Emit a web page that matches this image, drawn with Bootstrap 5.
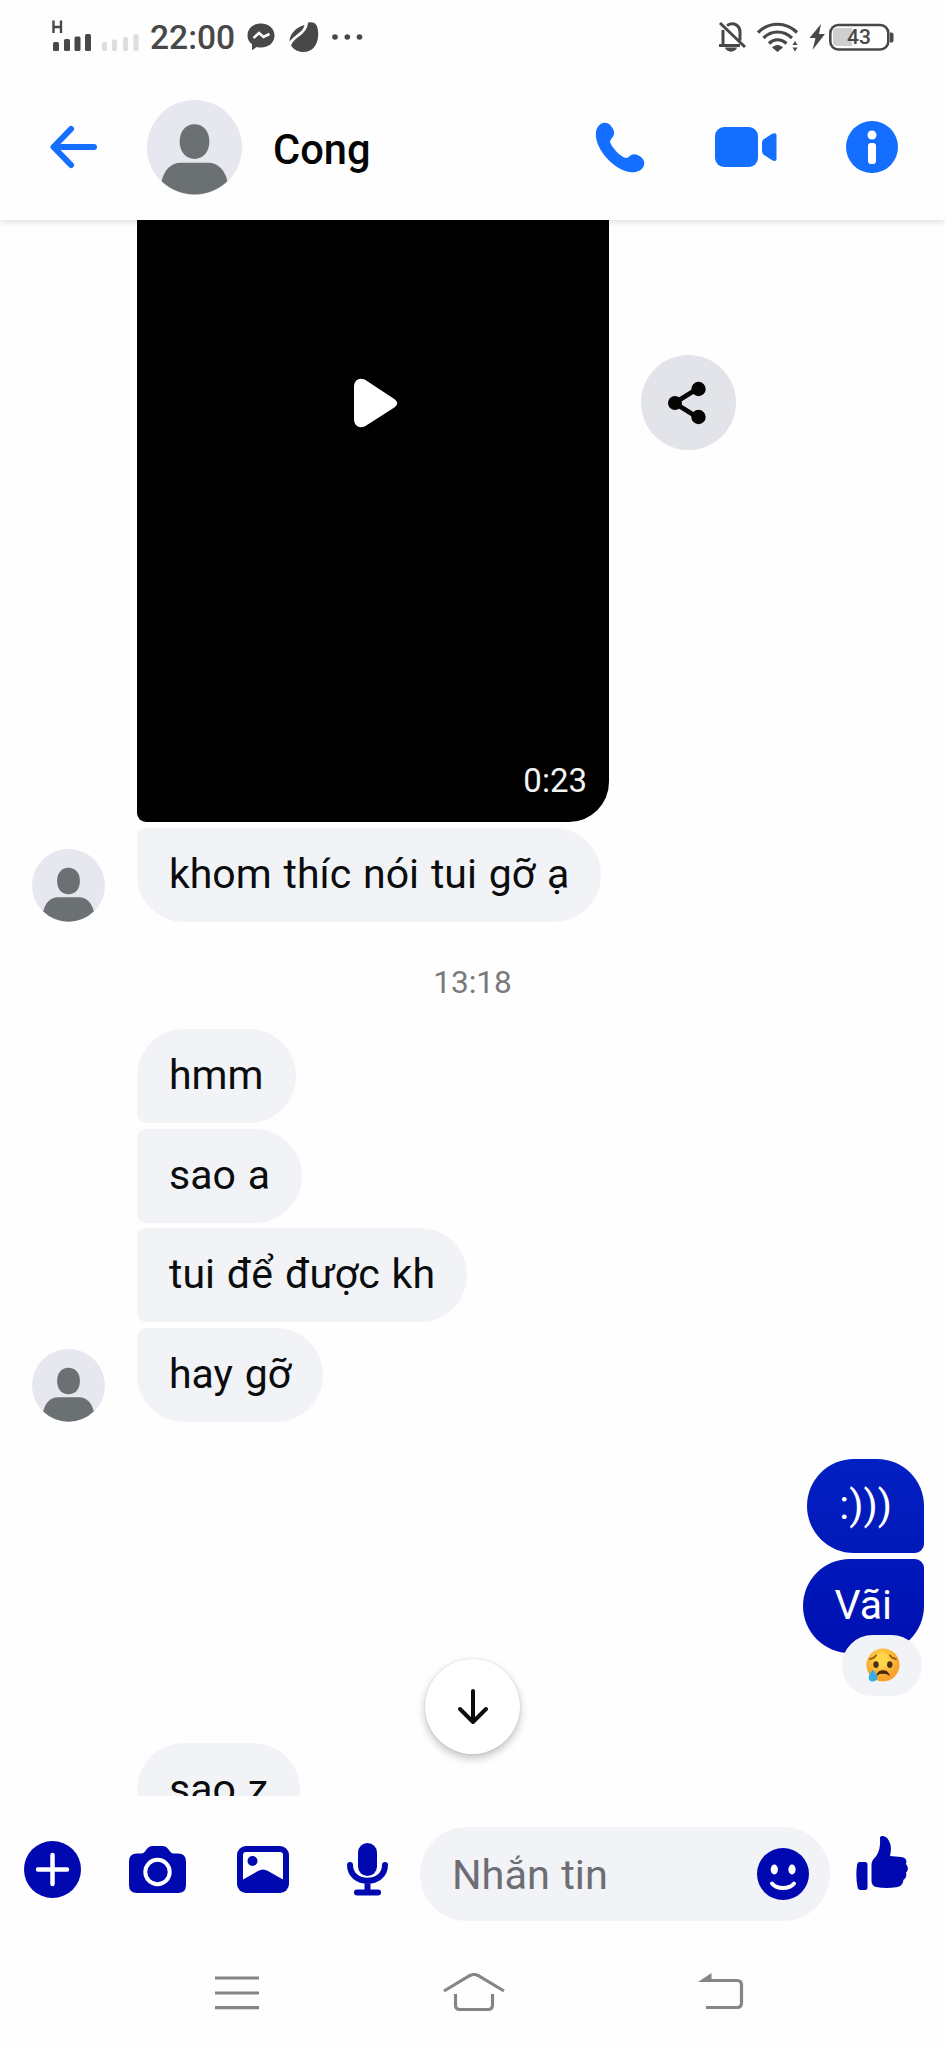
<!DOCTYPE html>
<html lang="vi">
<head>
<meta charset="utf-8">
<meta name="viewport" content="width=device-width, initial-scale=1">
<title>Cong</title>
<link href="https://cdn.jsdelivr.net/npm/bootstrap@5.3.0/dist/css/bootstrap.min.css" rel="stylesheet">
<style>
  :root { --deep: #0008b0; --sky: #146eff; --fog: #f2f3f7; }
  body { font-family: Roboto, "Noto Sans", sans-serif; background: #fefefe; color: #0b0c0e; }
  svg { display: block; flex: none; }
  .phone { width: 945px; height: 2048px; }
  .status { height: 74px; padding: 0 51px 0 52px; color: #484848; }
  .signal { margin-bottom: 7px; }
  .clock { font-size: 33.6px; line-height: 40px; font-weight: 500; margin: 2px 12px 0 11px; }
  .topbar { height: 146px; padding: 0 47px 0 50px; color: var(--sky); box-shadow: 0 2px 6px rgba(0,0,0,.13); clip-path: inset(0 0 -12px 0); z-index: 2; }
  .avatar { margin-left: 50px; }
  .peer { font-size: 41.6px; line-height: 48px; font-weight: 500; margin: 5px 0 0 31px; color: #050505; }
  .thread { height: 1576px; padding: 0 21px 0 32px; }
  .clip { width: 472px; height: 602px; border-radius: 0 0 40px 9px; padding-left: 34px; margin-left: 105px; background: #000; }
  .length { right: 22px; bottom: 21px; font-size: 33px; line-height: 40px; color: #f4f4f4; }
  .share { width: 95px; height: 95px; background: #e2e4e9; margin: 135px 0 0 32px; }
  .bubble { height: 94px; line-height: 92px; font-size: 41px; word-spacing: 1.7px; padding: 0 32px; background: var(--fog); border-radius: 9px 47px 47px 9px; white-space: nowrap; }
  .bubble.first { border-top-left-radius: 47px; }
  .bubble.last { border-bottom-left-radius: 47px; }
  .run { gap: 5.7px; }
  .indent { margin-left: 105px; }
  .stamp { font-size: 31.6px; line-height: 40px; color: #7a7a7c; margin: 41px 0 26px -11px; }
  .mine { color: #fff; line-height: 93px; border-radius: 47px 47px 9px 47px; background: linear-gradient(#0320c2, #0119b9); }
  .mine.tail { border-radius: 47px 9px 47px 47px; background: linear-gradient(#0118ba, #0010b2); }
  .reaction { width: 80px; height: 61px; right: 2px; top: 76px; background: var(--fog); border-radius: 31px; }
  .jump { width: 95px; height: 95px; left: 425px; bottom: 42.5px; background: #fff; color: #0b0c0e; box-shadow: 0 4px 9px rgba(0,0,0,.24), 0 0 2px rgba(0,0,0,.14); }
  .composer { height: 156px; padding-left: 24px; color: var(--deep); }
  .field { width: 410px; height: 94px; margin: 31px 0 0 32px; padding: 0 21px 0 32px; border-radius: 47px; background: var(--fog); }
  .hint { font-size: 41.5px; line-height: 48px; color: #6d6e73; word-spacing: 1px; margin-top: 2px; }
  .sysnav { height: 96px; color: #858585; padding: 21px 0 0 215px; }
</style>
</head>
<body>
<svg width="0" height="0" class="position-absolute" aria-hidden="true">
  <symbol id="person" viewBox="0 0 96 96">
    <circle cx="48" cy="48" r="48" fill="#e6e7ef"/>
    <g fill="#6b7072">
      <path d="M48 24.500c9 0 15 7 15 17.500s-6 17.500-15 17.500-15-7-15-17.500 6-17.500 15-17.500z"/>
      <path d="M34 63.500h28c9.500 0 17 7.500 19.200 18.700A48 48 0 0 1 14.800 82.200C17 71 24.500 63.500 34 63.500z"/>
    </g>
  </symbol>
</svg>
<div class="phone d-flex flex-column position-relative overflow-hidden">
  <div class="status d-flex align-items-center">
    <svg class="signal" width="87" height="36" viewBox="0 0 87 36" fill="currentColor">
      <path d="M1.500 4.500v12.500M9 4.500v12.500M1.500 11H9" fill="none" stroke="currentColor" stroke-width="2.400"/>
      <rect x="1" y="26" width="6" height="9" rx="1.500"/><rect x="12" y="23" width="6" height="12" rx="1.500"/><rect x="22.500" y="20.500" width="6" height="14.500" rx="1.500"/><rect x="33" y="18" width="6" height="17" rx="1.500"/>
      <g fill="#dedede"><rect x="50" y="26" width="5" height="9" rx="1.500"/><rect x="60" y="23.500" width="5" height="11.500" rx="1.500"/><rect x="71" y="21" width="5" height="14" rx="1.500"/><rect x="81.500" y="18" width="5" height="17" rx="1.500"/></g>
    </svg>
    <span class="clock">22:00</span>
    <svg width="28" height="28" viewBox="0 0 28 28"><path fill="currentColor" d="M14 .5c8 0 13.500 5 13.500 12S22 24.500 14 24.500c-1.500 0-3-.2-4.300-.6L5 27.300v-6C2 19.200.5 16.300.5 12.500.5 5.500 6 .5 14 .5z"/><path d="M6.500 15l5.500-5 4.500 4 6-3" fill="none" stroke="#fefefe" stroke-width="2.600"/></svg>
    <svg width="30" height="31" viewBox="0 0 30 31" style="margin-left:14px" fill="currentColor"><path d="M19 .8c7.500-2 10.500 3 10.200 12.200C28.800 23.500 23 30 14.500 30 9 30 4.500 27.500 2 23.500c2-4.500 4-6 8-9C15.500 10.500 18.500 6.500 19 .8z"/><path d="M15.500 3C7 5.500.5 12 .5 19.500 3 16.500 5 15 8 12.500 12 9.500 14.800 7 15.500 3z"/></svg>
    <svg width="32" height="8" viewBox="0 0 32 8" style="margin-left:12px" fill="currentColor"><circle cx="4" cy="4" r="2.800"/><circle cx="16.300" cy="4" r="2.800"/><circle cx="28.500" cy="4" r="2.800"/></svg>
    <div class="ms-auto d-flex align-items-center">
      <svg width="28" height="32" viewBox="0 0 28 32" style="margin-right:11px" fill="none" stroke="currentColor" stroke-width="3"><path d="M1 24.500h21M5 24V9M9 4.500c7-4 13 0 13 7v8M2 2l25 24"/><path d="M7 26.500h12c-1 5.500-11 5.500-12 0z" fill="currentColor" stroke="none"/></svg>
      <svg width="42" height="31" viewBox="0 0 42 31" class="me-2" fill="none" stroke="currentColor" stroke-width="3.200"><path d="M1 10.500c11-11 28-11 39 0M6.500 16c8-8 20-8 28.500 0M12 21.500c5-5 12-5 17.500 0"/><path d="M15 25.500c3-3.500 8-3.500 11 0l-5.500 4.500z" fill="currentColor" stroke="none"/><path d="M35.500 23l2.500-4 2.500 4zM35.500 25.500l2.500 4 2.500-4z" fill="currentColor" stroke="none"/></svg>
      <svg width="86" height="28" viewBox="0 0 86 28" style="margin:0 -1px 0 2px"><path d="M12 1L.5 15h6L3.500 27 16 11h-6z" fill="currentColor"/><path d="M28 5h15v18H28q-4 0-4-4V9q0-4 4-4z" fill="#cfcfcf"/><rect x="21.300" y="2" width="58" height="24.500" rx="8" fill="none" stroke="currentColor" stroke-width="2.600"/><path d="M81 9.500h1.500q2 0 2 2v6q0 2-2 2H81z" fill="currentColor"/><text x="50" y="21.300" text-anchor="middle" font-family="Roboto, sans-serif" font-weight="500" font-size="21" fill="currentColor">43</text></svg>
    </div>
  </div>

  <header class="topbar d-flex align-items-center position-relative">
    <svg width="47" height="44" viewBox="0 0 47 44" fill="none" stroke="currentColor" stroke-width="6" stroke-linecap="round" stroke-linejoin="round"><path d="M44 22H4M21 4L3.500 22 21 40"/></svg>
    <svg class="avatar" width="95" height="95"><use href="#person"/></svg>
    <div class="peer">Cong</div>
    <div class="ms-auto d-flex align-items-center">
      <svg width="50" height="51" viewBox="0 0 50 51" fill="currentColor"><path d="M9 .8c4-.8 7.500 2.500 9.500 7.200 1.700 4-.3 6.700-2.200 9-1.800 2.200-1.500 3.500.4 6.500 3.300 5 5.800 7.600 10.300 10.800 3 2 4.500 2.200 6.500.6 2.400-2 5-3.800 9-2 4.500 2 7.500 5.500 6.700 9.500-1 5-6 8.100-13 7.800C19 48.800.6 27 .8 12.500.9 6 4 1.800 9 .8z"/></svg>
      <svg width="62" height="42" viewBox="0 0 62 42" fill="currentColor" style="margin:0 69px 0 70px"><rect width="43" height="40" y="1" rx="9"/><path d="M47 16.500q0-2 1.700-3.300l8.500-5.400Q61.500 6 61.500 9v24q0 3-4.300 1.200l-8.500-5.400Q47 27.500 47 25.500z"/></svg>
      <svg width="52" height="52" viewBox="0 0 52 52"><circle cx="26" cy="26" r="26" fill="currentColor"/><circle cx="26" cy="14" r="4.500" fill="#fff"/><rect x="22" y="22" width="8" height="21" rx="3" fill="#fff"/></svg>
    </div>
  </header>

  <main class="thread position-relative overflow-hidden">
    <div class="d-flex align-items-start">
      <div class="clip position-relative">
        <svg width="44" height="50" viewBox="0 0 44 50" style="margin:158px 0 0 183px"><path fill="#fff" d="M0 9C0 1 7 -1.500 13 3l25 16.500c7 4.500 7 7 0 11.500L13 47C7 51.500 0 49 0 41z"/></svg>
        <span class="length position-absolute">0:23</span>
      </div>
      <div class="share rounded-circle d-flex align-items-center justify-content-center">
        <svg width="40" height="44" viewBox="0 0 40 44" style="margin-right:2px" fill="#050505"><path d="M29 8L6.500 22 29 36" fill="none" stroke="#050505" stroke-width="4.800"/><circle cx="7" cy="22" r="7"/><circle cx="30.500" cy="8" r="7.200"/><circle cx="30.500" cy="36" r="7.200"/></svg>
      </div>
    </div>
    <div class="d-flex align-items-end" style="margin-top:6px;gap:32px">
      <svg width="73" height="73"><use href="#person"/></svg>
      <div class="bubble last">khom thíc nói tui gỡ ạ</div>
    </div>
    <div class="stamp text-center">13:18</div>
    <div class="run d-flex flex-column align-items-start">
      <div class="bubble first indent">hmm</div>
      <div class="bubble indent">sao a</div>
      <div class="bubble indent">tui để được kh</div>
      <div class="d-flex align-items-end" style="gap:32px">
        <svg width="73" height="73"><use href="#person"/></svg>
        <div class="bubble last">hay gỡ</div>
      </div>
    </div>
    <div class="run d-flex flex-column align-items-end" style="margin-top:37px">
      <div class="bubble mine">:)))</div>
      <div class="bubble mine tail position-relative">Vãi
        <div class="reaction position-absolute d-flex align-items-center justify-content-center">
          <svg width="35" height="35" viewBox="0 0 36 36">
            <defs><radialGradient id="skin" cx=".45" cy=".35"><stop offset=".3" stop-color="#ffd84a"/><stop offset="1" stop-color="#f9a52b"/></radialGradient></defs>
            <circle cx="18.500" cy="17.500" r="17" fill="url(#skin)"/>
            <path d="M5 11.500c2.500-.3 5-1.800 6.500-4M25.500 7.500c1.500 2.200 4 3.700 6.500 4" fill="none" stroke="#9c5d12" stroke-width="1.700" stroke-linecap="round"/>
            <ellipse cx="11.300" cy="17" rx="2.800" ry="3.500" fill="#4a321a"/><ellipse cx="25.500" cy="17" rx="2.800" ry="3.500" fill="#4a321a"/>
            <path d="M12.500 27.500c2-5.500 10-5.500 12 0-3-2-9-2-12 0z" fill="#4a2712" stroke="#4a2712" stroke-width="1.200"/>
            <path d="M8 22c2.500 3 4.500 6 4.500 8.500S10.500 34.500 8 34.500 3.800 33 3.800 30.500 5.500 25 8 22z" fill="#36aee5"/>
          </svg>
        </div>
      </div>
    </div>
    <div class="bubble first indent d-inline-block" style="margin-top:90px">sao z</div>
    <div class="jump position-absolute rounded-circle d-flex align-items-center justify-content-center">
      <svg width="32" height="37" viewBox="0 0 32 37" fill="none" stroke="currentColor" stroke-width="4" stroke-linecap="round" stroke-linejoin="round"><path d="M16 3v31M3 21l13 13 13-13"/></svg>
    </div>
  </main>

  <div class="composer d-flex align-items-start">
    <svg width="57" height="57" viewBox="0 0 57 57" style="margin-top:45px"><circle cx="28.500" cy="28.500" r="28.500" fill="currentColor"/><path d="M28.500 14v29M14 28.500h29" stroke="#fff" stroke-width="4.500" stroke-linecap="round"/></svg>
    <svg width="57" height="47" viewBox="0 0 57 47" style="margin:50px 0 0 48px"><path fill="currentColor" d="M8 7.500h4.500q2 0 3.500-2l2-2.800Q20 0 23 0h11q3 0 5 2.700l2 2.800q1.500 2 3.500 2H49q8 0 8 8V39q0 8-8 8H8q-8 0-8-8V15.500q0-8 8-8z"/><circle cx="28.500" cy="26" r="12.200" fill="none" stroke="#fff" stroke-width="4"/></svg>
    <svg width="52" height="47" viewBox="0 0 52 47" style="margin:50px 0 0 51px"><rect width="52" height="47" rx="9" fill="currentColor"/><path d="M9 6h34q3 0 3 3v24.500L31 25q-5-3-10 0L6 33.500V9q0-3 3-3z" fill="#fff"/><circle cx="15.500" cy="15" r="5" fill="currentColor"/></svg>
    <svg width="41" height="53" viewBox="0 0 41 53" style="margin:47px 0 0 58px"><rect x="11" y="0" width="19" height="33" rx="9.500" fill="currentColor"/><path d="M3 22c0 21 35 21 35 0M20.500 38v11M10 49.500h21" fill="none" stroke="currentColor" stroke-width="6" stroke-linecap="round"/></svg>
    <div class="field d-flex align-items-center justify-content-between">
      <span class="hint">Nhắn tin</span>
      <svg width="52" height="52" viewBox="0 0 52 52"><circle cx="26" cy="26" r="26" fill="currentColor"/><ellipse cx="17.300" cy="21.500" rx="3.600" ry="5" fill="#fff"/><ellipse cx="35" cy="21.500" rx="3.600" ry="5" fill="#fff"/><path d="M15 35.500c5 6 17 6 22 0" fill="none" stroke="#fff" stroke-width="4" stroke-linecap="round"/></svg>
    </div>
    <svg width="52" height="55" viewBox="0 0 52 55" style="margin:40px 0 0 26px" fill="currentColor"><path d="M3.500 26H9q2.500 0 2.500 2.500v23Q11.500 54 9 54H4.500Q2 54 1.500 51 -.5 40 1 29q.5-3 2.500-3z"/><path d="M24 2c0-3 5-2.500 7.500.5 4 5 4 11 2.500 17.500l11 1c5 .5 6.500 4 4.800 7 2.700 2.500 2.700 6.500.2 8.500 1 3-.2 6-2.700 7.500 0 4-3 7-7.300 7.300-7 1-14 .7-20-.3-3-.7-4.500-3-4.500-6V29c0-3 1-5 3-7 4.500-5 6-11 5.500-20z"/></svg>
  </div>

  <nav class="sysnav d-flex align-items-start">
    <svg width="44" height="40" viewBox="0 0 44 40" stroke="currentColor" stroke-width="3.200"><path d="M0 5h44M0 20h44M0 34.700h44"/></svg>
    <svg width="62" height="40" viewBox="0 0 62 40" fill="none" stroke="currentColor" stroke-width="3.200" style="margin-left:184px"><path d="M1 18L27 2.500q4-2 8 0L61 18M12.500 21v11q0 4.500 4.500 4.500h28q4.500 0 4.500-4.500V21"/></svg>
    <svg width="46" height="40" viewBox="0 0 46 40" fill="none" stroke="currentColor" stroke-width="3.200" style="margin-left:193px"><path d="M8 7.500h31q4.500 0 4.500 4.500v18q0 4.500-4.500 4.500H8"/><path d="M0 9L13.500 0v9z" fill="currentColor" stroke="none"/></svg>
  </nav>
</div>
<script src="https://cdn.jsdelivr.net/npm/bootstrap@5.3.0/dist/js/bootstrap.bundle.min.js"></script>
</body>
</html>
